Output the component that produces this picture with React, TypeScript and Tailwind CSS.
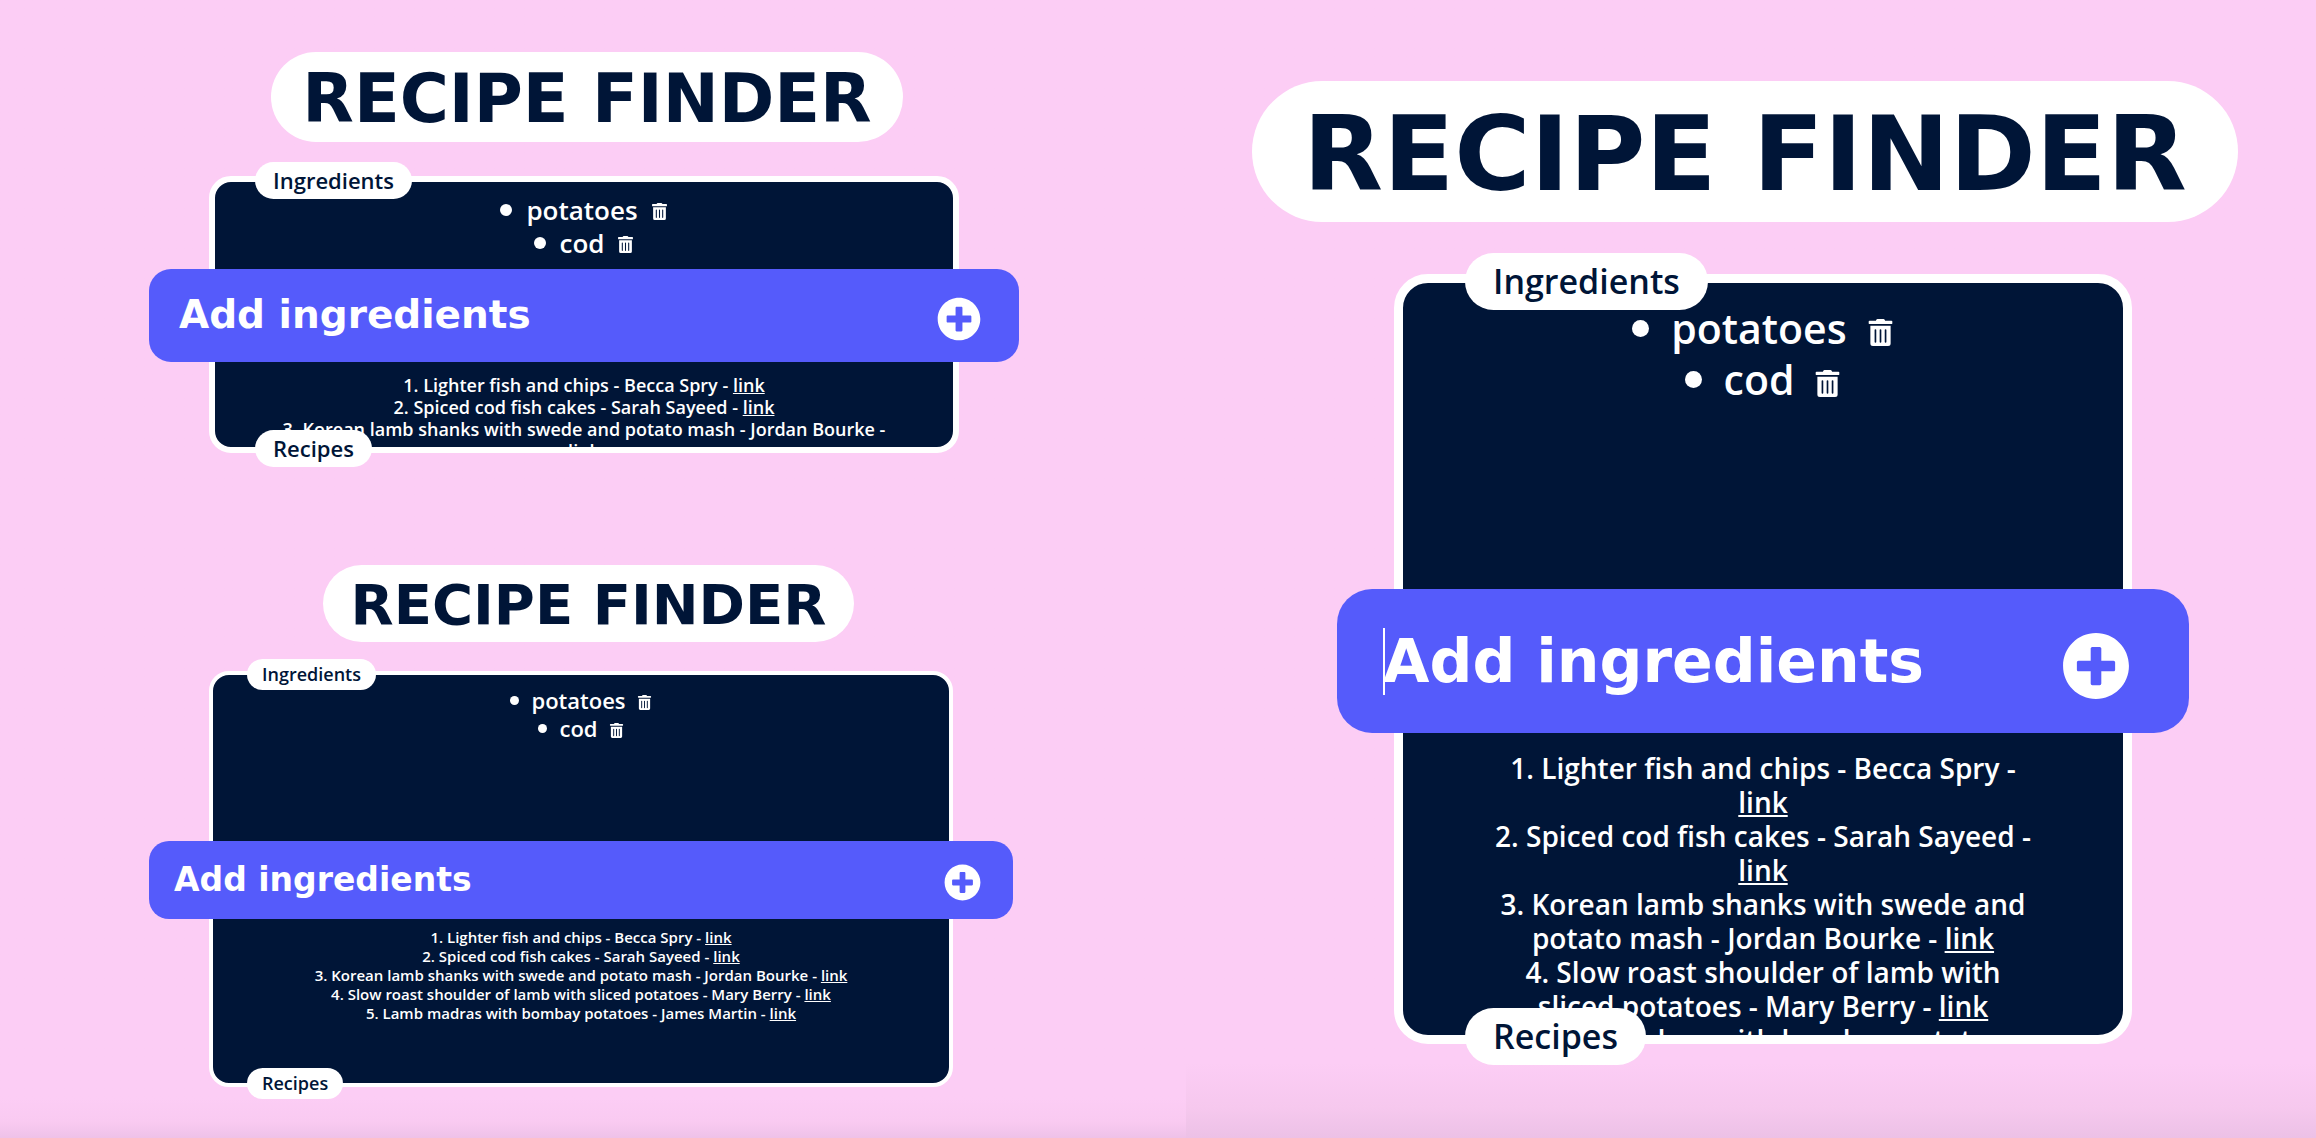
import { FaPlusCircle, FaTrashAlt } from "react-icons/fa";

const ingredients = ["potatoes", "cod"];

const recipes = [
  "Lighter fish and chips - Becca Spry",
  "Spiced cod fish cakes - Sarah Sayeed",
  "Korean lamb shanks with swede and potato mash - Jordan Bourke",
  "Slow roast shoulder of lamb with sliced potatoes - Mary Berry",
  "Lamb madras with bombay potatoes - James Martin",
];

type Theme = {
  titleWrap: string;
  title: string;
  cardWrap: string;
  card: string;
  tag: string;
  tagTop: string;
  tagBottom: string;
  ingredientArea: string;
  ingredient: string;
  bullet: string;
  trash: string;
  bar: string;
  input: string;
  plus: string;
  recipeArea: string;
  recipeList: string;
};

const compact: Theme = {
  titleWrap: "pr-3",
  title: "h-[90px] px-[31px] pt-1 text-[67px]",
  cardWrap: "mt-[34px] pl-[209px] pr-[227px]",
  card: "rounded-[22px] border-[6px]",
  tag: "left-10 h-[37px] px-[18px] pb-[2px] text-[22px]",
  tagTop: "-top-5",
  tagBottom: "-bottom-5",
  ingredientArea: "h-[87px] pt-[11px]",
  ingredient: "h-[33px] text-[26px]",
  bullet: "mr-[14px] size-[12px]",
  trash: "ml-[13px] mt-1 text-[17px]",
  bar: "-mx-[66px] h-[93px] rounded-[22px] pl-[30px] pr-[38px]",
  input: "text-[39px]",
  plus: "mt-[6px] text-[44px]",
  recipeArea: "h-[85px] pt-3",
  recipeList: "w-[604px] text-[18px] leading-[22px]",
};

const medium: Theme = {
  titleWrap: "pr-[9px]",
  title: "h-[77px] px-[28px] pt-[2px] text-[56px]",
  cardWrap: "mt-[29px] pl-[209px] pr-[233px]",
  card: "rounded-[20px] border-4",
  tag: "left-[34px] h-[31px] px-[15px] pb-[2px] text-[18px]",
  tagTop: "-top-4",
  tagBottom: "-bottom-4",
  ingredientArea: "h-[166px] pt-[11px]",
  ingredient: "h-[28px] text-[22px]",
  bullet: "mr-3 size-[9px]",
  trash: "ml-[11px] mt-1 text-[15px]",
  bar: "-mx-16 h-[78px] rounded-[20px] pl-[25px] pr-8",
  input: "text-[33px]",
  plus: "mt-1 text-[37px]",
  recipeArea: "h-[164px] pt-[9px]",
  recipeList: "w-[600px] text-[15px] leading-[19px]",
};

const large: Theme = {
  titleWrap: "pr-3",
  title: "h-[141px] px-[51px] pt-1 text-[104px]",
  cardWrap: "mt-[52px] pl-[208px] pr-[184px]",
  card: "rounded-[34px] border-[9px]",
  tag: "left-[62px] h-[57px] px-7 pb-[2px] text-[34px]",
  tagTop: "-top-[30px]",
  tagBottom: "-bottom-[30px]",
  ingredientArea: "h-[306px] pt-5",
  ingredient: "h-[51px] text-[41px]",
  bullet: "mr-[22px] size-[17px]",
  trash: "ml-5 mt-2 text-[27px]",
  bar: "-mx-[66px] h-[144px] rounded-[35px] pl-[46px] pr-[59px]",
  input: "text-[60px]",
  plus: "mt-[10px] text-[68px]",
  recipeArea: "h-[302px] pt-[18px]",
  recipeList: "w-[548px] text-[28px] leading-[34px]",
};

function RecipeFinder({ id, theme, caret = false }: { id: string; theme: Theme; caret?: boolean }) {
  return (
    <section>
      <header className={`flex justify-center ${theme.titleWrap}`}>
        <h1
          className={`flex items-center whitespace-nowrap rounded-full bg-white font-['DejaVu_Sans',sans-serif] font-bold leading-none text-[#001537] ${theme.title}`}
        >
          RECIPE FINDER
        </h1>
      </header>

      <div className={theme.cardWrap}>
        <div className={`relative border-white bg-[#001537] ${theme.card}`}>
          <h2 className={`absolute z-10 flex items-center rounded-full bg-white font-semibold leading-none text-[#001537] ${theme.tag} ${theme.tagTop}`}>
            Ingredients
          </h2>
          <ul className={`flex flex-col items-center text-white ${theme.ingredientArea}`}>
            {ingredients.map((name) => (
              <li key={name} className={`flex items-center font-semibold leading-none ${theme.ingredient}`}>
                <span className={`rounded-full bg-white ${theme.bullet}`} />
                {name}
                <button type="button" aria-label={`Remove ${name}`} className={theme.trash}>
                  <FaTrashAlt />
                </button>
              </li>
            ))}
          </ul>

          <form
            onSubmit={(event) => event.preventDefault()}
            className={`relative flex items-center bg-[#555bfb] text-white ${theme.bar}`}
          >
            <div className="relative flex min-w-0 flex-1 items-center">
              {caret && <span className="absolute left-0 h-[67px] w-[2px] bg-white" />}
              <input
                id={id}
                type="text"
                aria-label="Add ingredients"
                placeholder="Add ingredients"
                className={`w-full bg-transparent font-['DejaVu_Sans',sans-serif] font-bold outline-none placeholder:text-white ${theme.input}`}
              />
            </div>
            <button type="submit" aria-label="Add" className={theme.plus}>
              <FaPlusCircle />
            </button>
          </form>

          <div className={`flex justify-center overflow-hidden text-white ${theme.recipeArea}`}>
            <ol className={`text-center font-semibold ${theme.recipeList}`}>
              {recipes.map((recipe, index) => (
                <li key={recipe}>
                  {index + 1}. {recipe} -{" "}
                  <a href="#recipe" className="underline">
                    link
                  </a>
                </li>
              ))}
            </ol>
          </div>
          <h2 className={`absolute flex items-center rounded-full bg-white font-semibold leading-none text-[#001537] ${theme.tag} ${theme.tagBottom}`}>
            Recipes
          </h2>
        </div>
      </div>
    </section>
  );
}

export default function App() {
  return (
    <main className="grid min-h-screen grid-cols-[1186fr_1130fr] bg-[#fccdf5] font-['Open_Sans',sans-serif]">
      <div className="flex flex-col gap-[112px] bg-linear-to-t from-[#eec2e8] via-[#f9caf1] via-[16px] to-[#fccdf5] to-[40px] pt-[52px]">
        <RecipeFinder id="compact-ingredient" theme={compact} />
        <RecipeFinder id="medium-ingredient" theme={medium} />
      </div>
      <div className="bg-linear-to-t from-[#ecc1e6] via-[#f6c8ee] via-[30px] to-[#fccdf5] to-[75px] pt-[81px]">
        <RecipeFinder id="large-ingredient" theme={large} caret />
      </div>
    </main>
  );
}
